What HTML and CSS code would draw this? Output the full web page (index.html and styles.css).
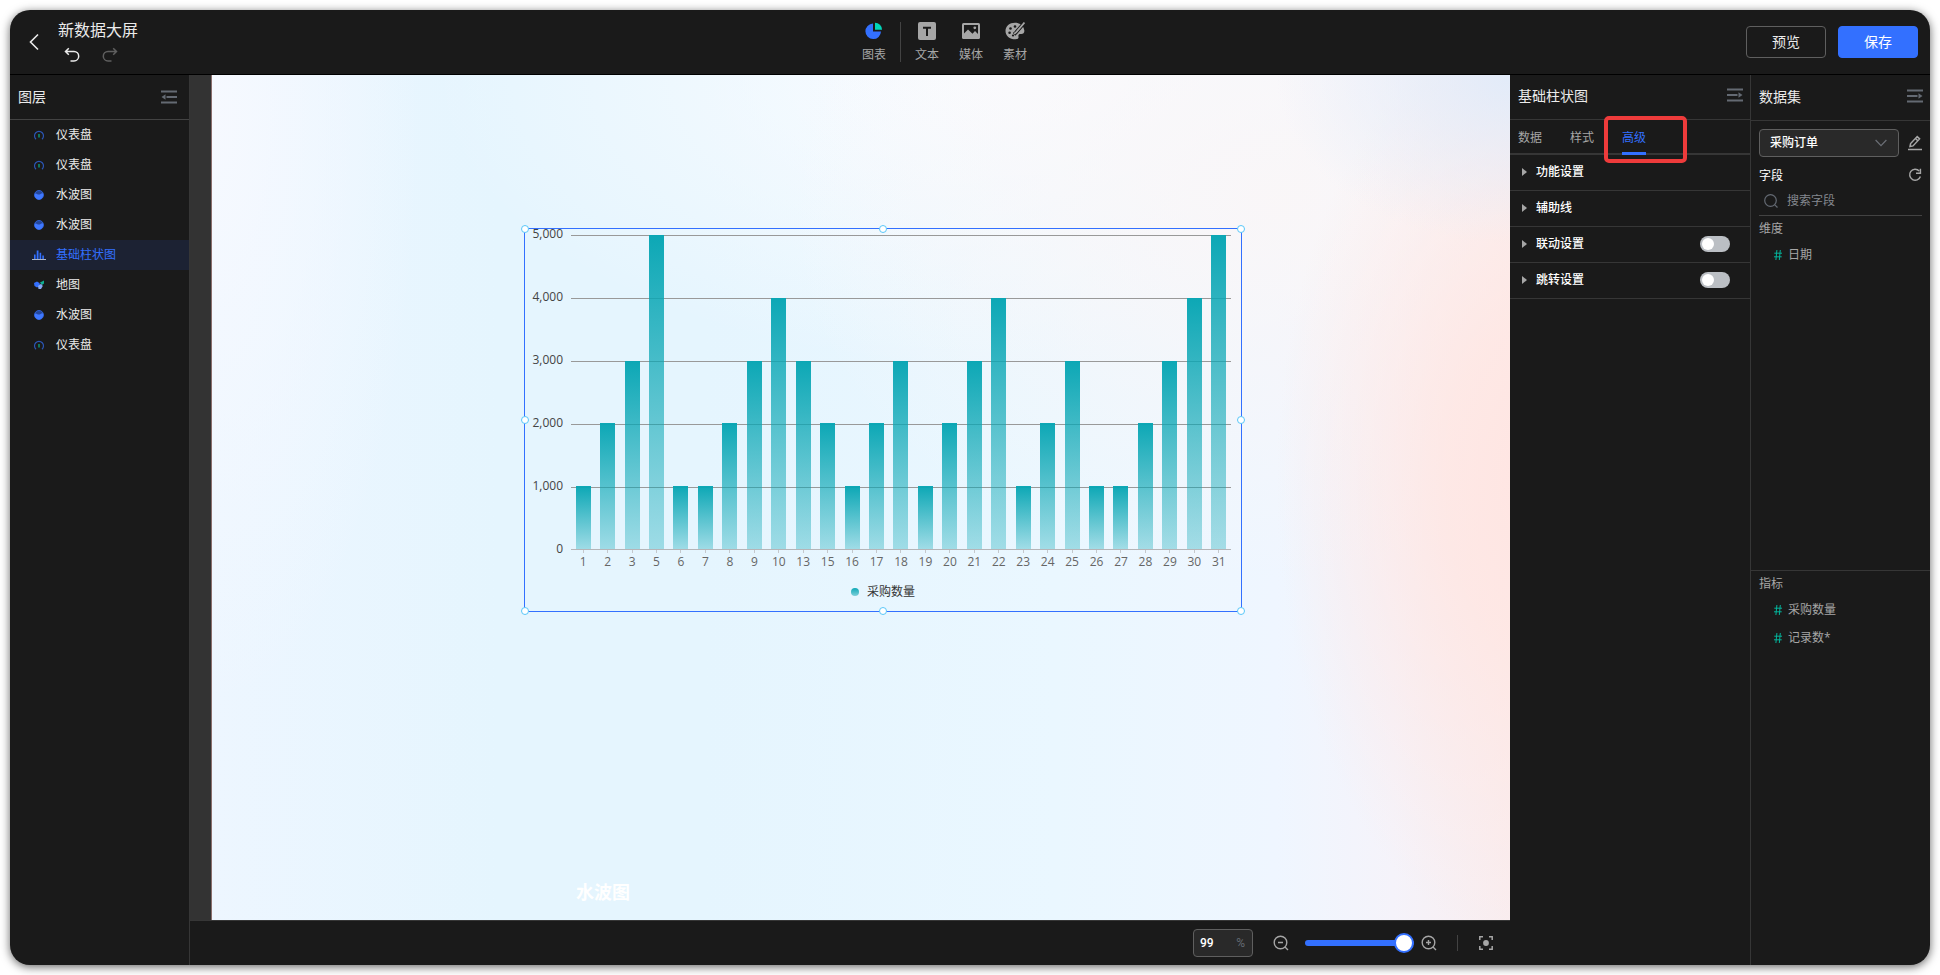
FILE: index.html
```html
<!DOCTYPE html>
<html lang="zh-CN">
<head>
<meta charset="utf-8">
<title>新数据大屏</title>
<link rel="stylesheet" href="styles.css">
</head>
<body>
<svg class="sprite" aria-hidden="true">
  <defs>
    <symbol id="i-gauge" viewBox="0 0 12 12">
      <path d="M3 10.200A4.500 4.500 0 1 1 9 10.200" fill="none" stroke="#2b55b5" stroke-width="1.200"/>
      <path d="M5.200 5h1.600v3.400H5.200z" fill="#0d8c70"/>
    </symbol>
    <symbol id="i-water" viewBox="0 0 12 12">
      <circle cx="6" cy="6" r="4.500" fill="#24479c" stroke="#2f5fd0" stroke-width="1"/>
      <path d="M2 4.600c1.400-.6 2.400 1.200 3.800 1 1.600-.2 2.400-1.800 4-1.400A4.300 4.300 0 1 1 2 4.600z" fill="#3f78ff"/>
    </symbol>
    <symbol id="i-bars" viewBox="0 0 14 12">
      <path d="M2 5.500h1.600V10H2zM4.700 1.500h1.800V10H4.700zM7.600 3.800h1.600V10H7.600zM10.300 6.500h1.600V10h-1.600z" fill="#3370ff"/>
      <path d="M0 10.500h14" stroke="#aab4c8" stroke-width="1"/>
    </symbol>
    <symbol id="i-map" viewBox="0 0 12 12">
      <path d="M1 4l3-1.500 2.500 1.500L7 7 4 8.500 1.500 7z" fill="#3370ff"/>
      <path d="M7 3.500l4-2v3L9 6z" fill="#0fae92"/>
      <path d="M5 7l3-2.200L9.800 7 8 10H5.500z" fill="#86a9f5"/>
    </symbol>
    <symbol id="i-unfold" viewBox="0 0 16 14">
      <path d="M0 1.500h16M0 7h10.500M0 12.500h16" stroke="#646a73" stroke-width="2"/>
      <path d="M11.500 4.300L15.500 7l-4 2.700z" fill="#646a73"/>
    </symbol>
    <symbol id="i-fold" viewBox="0 0 16 14">
      <path d="M0 1.500h16M5.500 7H16M0 12.500h16" stroke="#646a73" stroke-width="2"/>
      <path d="M4.500 4.300L.5 7l4 2.700z" fill="#646a73"/>
    </symbol>
    <symbol id="i-caret" viewBox="0 0 5 8"><path d="M0 0l5 4-5 4z" fill="#a6a6a6"/></symbol>
  </defs>
</svg>

<div class="app">
  <header class="topbar">
    <div class="topbar-left">
      <button class="icon-btn back" aria-label="返回">
        <svg width="12" height="18" viewBox="0 0 12 18"><path d="M10 1.500L2.500 9l7.500 7.500" fill="none" stroke="#ebebeb" stroke-width="1.600"/></svg>
      </button>
      <div class="title-block">
        <h1>新数据大屏</h1>
        <div class="history">
          <button class="icon-btn" aria-label="撤销">
            <svg width="16" height="16" viewBox="0 0 16 16"><path d="M4.800 1.200L1.500 4.500l3.300 3.300M1.800 4.500H10a4.700 4.700 0 0 1 0 9.400H6.500" fill="none" stroke="#ebebeb" stroke-width="1.500"/></svg>
          </button>
          <button class="icon-btn" aria-label="重做" disabled>
            <svg width="16" height="16" viewBox="0 0 16 16"><path d="M11.200 1.200l3.300 3.300-3.300 3.300M14.200 4.500H6a4.700 4.700 0 0 0 0 9.400h3.500" fill="none" stroke="#5f5f5f" stroke-width="1.500"/></svg>
          </button>
        </div>
      </div>
    </div>

    <nav class="tools" aria-label="组件">
      <button class="tool">
        <svg width="18" height="18" viewBox="0 0 18 18"><path d="M8 1.500v8h8A7.800 7.800 0 1 1 8 1.500z" fill="#3370ff"/><path d="M10 .8a7 7 0 0 1 7 7h-7z" fill="#00d6b9"/></svg>
        <span>图表</span>
      </button>
      <span class="tool-sep"></span>
      <button class="tool">
        <svg width="18" height="18" viewBox="0 0 18 18"><rect x="0" y="0" width="18" height="18" rx="2" fill="#a6a6a6"/><path d="M5 5.800h8M9 5v9" stroke="#1a1a1a" stroke-width="2"/></svg>
        <span>文本</span>
      </button>
      <button class="tool">
        <svg width="18" height="18" viewBox="0 0 18 18"><rect x="0" y="1" width="18" height="16" rx="1.500" fill="#a6a6a6"/><path d="M2 3h14v9l-3-3-2.500 2.800L6 7.500l-4 4z" fill="#1a1a1a"/><circle cx="12.800" cy="5.800" r="1.400" fill="#a6a6a6"/></svg>
        <span>媒体</span>
      </button>
      <button class="tool">
        <svg width="20" height="18" viewBox="0 0 20 18">
          <path d="M10 .8c4 0 8.500 2.400 9.300 7.500.4 2.600-1.200 4-3.300 3.800-2-.2-3 .8-2.500 2.600.4 1.700-.8 2.600-3 2.600C4.500 17.300.5 13.800.5 9S4.500.8 10 .8z" fill="#a6a6a6"/>
          <g fill="#1a1a1a"><circle cx="10" cy="4.500" r="1.300"/><circle cx="5.500" cy="6.500" r="1.300"/><circle cx="4.600" cy="10.800" r="1.300"/><circle cx="8" cy="13.500" r="1.100"/></g>
          <path d="M19.500.5L11 10.500l-2 1.800" stroke="#1a1a1a" stroke-width="3.600" fill="none"/>
          <path d="M19.500.5L11.500 9.800l-2.300 2.100" stroke="#a6a6a6" stroke-width="1.700" fill="none"/>
        </svg>
        <span>素材</span>
      </button>
    </nav>

    <div class="actions">
      <button class="btn">预览</button>
      <button class="btn btn-primary">保存</button>
    </div>
  </header>

  <div class="body">
    <aside class="layers">
      <div class="layers-head">
        <h2>图层</h2>
        <button class="icon-btn" aria-label="收起图层"><svg width="16" height="14"><use href="#i-fold"/></svg></button>
      </div>
      <ul class="layer-list">
        <li><svg width="14" height="12"><use href="#i-gauge"/></svg><span>仪表盘</span></li>
        <li><svg width="14" height="12"><use href="#i-gauge"/></svg><span>仪表盘</span></li>
        <li><svg width="14" height="12"><use href="#i-water"/></svg><span>水波图</span></li>
        <li><svg width="14" height="12"><use href="#i-water"/></svg><span>水波图</span></li>
        <li class="active"><svg width="14" height="12"><use href="#i-bars"/></svg><span>基础柱状图</span></li>
        <li><svg width="14" height="12"><use href="#i-map"/></svg><span>地图</span></li>
        <li><svg width="14" height="12"><use href="#i-water"/></svg><span>水波图</span></li>
        <li><svg width="14" height="12"><use href="#i-gauge"/></svg><span>仪表盘</span></li>
      </ul>
    </aside>

    <main class="stage">
      <div class="stage-view">
        <div class="canvas">
          <section class="widget" aria-label="基础柱状图">
            <div class="chart">
              <div class="y-axis">
                <span>5,000</span><span>4,000</span><span>3,000</span><span>2,000</span><span>1,000</span><span>0</span>
              </div>
              <div class="plot">
                <div class="bars">
                  <i style="height:20%"></i><i style="height:40%"></i><i style="height:60%"></i><i style="height:100%"></i><i style="height:20%"></i><i style="height:20%"></i><i style="height:40%"></i><i style="height:60%"></i><i style="height:80%"></i><i style="height:60%"></i><i style="height:40%"></i><i style="height:20%"></i><i style="height:40%"></i><i style="height:60%"></i><i style="height:20%"></i><i style="height:40%"></i><i style="height:60%"></i><i style="height:80%"></i><i style="height:20%"></i><i style="height:40%"></i><i style="height:60%"></i><i style="height:20%"></i><i style="height:20%"></i><i style="height:40%"></i><i style="height:60%"></i><i style="height:80%"></i><i style="height:100%"></i>
                </div>
                <div class="x-axis">
                  <span>1</span><span>2</span><span>3</span><span>5</span><span>6</span><span>7</span><span>8</span><span>9</span><span>10</span><span>13</span><span>15</span><span>16</span><span>17</span><span>18</span><span>19</span><span>20</span><span>21</span><span>22</span><span>23</span><span>24</span><span>25</span><span>26</span><span>27</span><span>28</span><span>29</span><span>30</span><span>31</span>
                </div>
              </div>
            </div>
            <div class="legend"><i></i><span>采购数量</span></div>
            <b class="handle nw"></b><b class="handle n"></b><b class="handle ne"></b><b class="handle w"></b><b class="handle e"></b><b class="handle sw"></b><b class="handle s"></b><b class="handle se"></b>
          </section>
          <div class="water-title">水波图</div>
        </div>
      </div>
      <footer class="zoombar">
        <label class="zoom-input"><input type="text" value="99" aria-label="缩放比例"><span>%</span></label>
        <button class="icon-btn zoom-out" aria-label="缩小">
          <svg width="16" height="16" viewBox="0 0 16 16"><g fill="none" stroke="#a6a6a6" stroke-width="1.400"><circle cx="7.500" cy="7.500" r="6.300"/><path d="M12 12l3 3M5 7.500h5"/></g></svg>
        </button>
        <input class="zoom-range" type="range" min="10" max="99" value="99" aria-label="缩放">
        <button class="icon-btn zoom-in" aria-label="放大">
          <svg width="16" height="16" viewBox="0 0 16 16"><g fill="none" stroke="#a6a6a6" stroke-width="1.400"><circle cx="7.500" cy="7.500" r="6.300"/><path d="M12 12l3 3M5 7.500h5M7.500 5v5"/></g></svg>
        </button>
        <span class="zoom-sep"></span>
        <button class="icon-btn" aria-label="适应画布">
          <svg width="14" height="14" viewBox="0 0 14 14"><path d="M.8 4V.8H4M10 .8h3.200V4M13.200 10v3.200H10M4 13.200H.8V10" fill="none" stroke="#a6a6a6" stroke-width="1.500"/><circle cx="7" cy="7" r="2.900" fill="#a6a6a6"/></svg>
        </button>
      </footer>
    </main>

    <aside class="props">
      <div class="panel-head">
        <h2>基础柱状图</h2>
        <button class="icon-btn" aria-label="收起属性"><svg width="16" height="14"><use href="#i-unfold"/></svg></button>
      </div>
      <div class="tabs" role="tablist">
        <button role="tab">数据</button>
        <button role="tab">样式</button>
        <button role="tab" class="on" aria-selected="true">高级</button>
        <span class="mark"></span>
      </div>
      <div class="row"><button class="fold"><svg width="5" height="8"><use href="#i-caret"/></svg>功能设置</button></div>
      <div class="row"><button class="fold"><svg width="5" height="8"><use href="#i-caret"/></svg>辅助线</button></div>
      <div class="row"><button class="fold"><svg width="5" height="8"><use href="#i-caret"/></svg>联动设置</button><input class="switch" type="checkbox" aria-label="联动设置"></div>
      <div class="row"><button class="fold"><svg width="5" height="8"><use href="#i-caret"/></svg>跳转设置</button><input class="switch" type="checkbox" aria-label="跳转设置"></div>
    </aside>

    <aside class="dataset">
      <div class="panel-head">
        <h2>数据集</h2>
        <button class="icon-btn" aria-label="收起数据集"><svg width="16" height="14"><use href="#i-unfold"/></svg></button>
      </div>
      <div class="source">
        <div class="select">
          <select aria-label="数据集"><option>采购订单</option></select>
          <svg width="12" height="8" viewBox="0 0 12 8"><path d="M.6 1L6 6.600 11.400 1" fill="none" stroke="#6b6f76" stroke-width="1.200"/></svg>
        </div>
        <button class="icon-btn" aria-label="编辑">
          <svg width="14" height="16" viewBox="0 0 14 16"><path d="M2 11.500l.6-3L9.200 1.600l2.400 2.300L5 10.900zM7.500 3.500l2.300 2.300" fill="none" stroke="#a6a6a6" stroke-width="1.500"/><path d="M0 14.500h14" stroke="#a6a6a6" stroke-width="1.500"/></svg>
        </button>
      </div>
      <div class="fields-head">
        <span>字段</span>
        <button class="icon-btn" aria-label="刷新">
          <svg width="14" height="14" viewBox="0 0 14 14"><path d="M11.200 3A5.500 5.500 0 1 0 12.400 8.500" fill="none" stroke="#a6a6a6" stroke-width="1.500"/><path d="M12.400.8v4.400H8" fill="none" stroke="#a6a6a6" stroke-width="1.500"/></svg>
        </button>
      </div>
      <label class="search">
        <svg width="14" height="14" viewBox="0 0 14 14"><g fill="none" stroke="#646a73" stroke-width="1.200"><circle cx="6.500" cy="6.500" r="5.800"/><path d="M10.800 10.800l2.700 2.700"/></g></svg>
        <input type="text" placeholder="搜索字段" aria-label="搜索字段">
      </label>
      <section class="group dims">
        <h3>维度</h3>
        <ul><li><svg width="8" height="10" viewBox="0 0 8 10"><path d="M2.900 0L1.900 10M6.300 0l-1 10M.3 3.200H8M0 6.800h7.700" fill="none" stroke="#04b49c" stroke-width="1"/></svg><span>日期</span></li></ul>
      </section>
      <section class="group metrics">
        <h3>指标</h3>
        <ul>
          <li><svg width="8" height="10" viewBox="0 0 8 10"><path d="M2.900 0L1.900 10M6.300 0l-1 10M.3 3.200H8M0 6.800h7.700" fill="none" stroke="#04b49c" stroke-width="1"/></svg><span>采购数量</span></li>
          <li><svg width="8" height="10" viewBox="0 0 8 10"><path d="M2.900 0L1.900 10M6.300 0l-1 10M.3 3.200H8M0 6.800h7.700" fill="none" stroke="#04b49c" stroke-width="1"/></svg><span>记录数*</span></li>
        </ul>
      </section>
    </aside>
  </div>
</div>
</body>
</html>
```
FILE: styles.css
```css
* { box-sizing: border-box; }

body {
  margin: 0;
  height: 100vh;
  padding: 10px;
  background: #fff;
  color: #ebebeb;
  font: 12px/20px "Open Sans", "Noto Sans CJK SC", sans-serif;
}

h1, h2, h3, ul { margin: 0; padding: 0; font-weight: 400; list-style: none; }
button, input, select { font: inherit; color: inherit; }
button { padding: 0; border: 0; background: none; }
svg { display: block; flex: none; }
.sprite { position: absolute; width: 0; height: 0; }
.icon-btn { display: flex; align-items: center; justify-content: center; }

.app {
  display: flex;
  flex-direction: column;
  height: 100%;
  overflow: hidden;
  border-radius: 20px;
  background: #1a1a1a;
  box-shadow: 0 2px 10px rgba(0, 0, 0, .6);
}

/* top bar */
.topbar {
  display: flex;
  align-items: center;
  justify-content: space-between;
  height: 65px;
  flex: none;
  padding: 0 12px 0 18px;
  border-bottom: 1px solid #000;
}
.topbar-left { display: flex; align-items: center; gap: 18px; padding-right: 5px; }
.title-block h1 { font-size: 16px; line-height: 24px; }
.history { display: flex; gap: 22px; padding: 5px 0 4px 6px; }
.tools { display: flex; align-items: center; padding-top: 3px; }
.tool { display: flex; flex-direction: column; align-items: center; gap: 5px; width: 44px; color: #a6a6a6; }
.tool-sep { width: 1px; height: 40px; margin: 0 4px 3px; background: #434343; }
.actions { display: flex; gap: 12px; }
.btn { width: 80px; height: 32px; border: 1px solid #5f5f5f; border-radius: 4px; font-size: 14px; }
.btn-primary { border-color: #3370ff; background: #3370ff; color: #fff; }

.body { display: flex; flex: 1; min-height: 0; }
h2 { font-size: 14px; line-height: 22px; }

/* layers */
.layers { width: 180px; flex: none; border-right: 1px solid #363636; }
.layers-head {
  display: flex;
  align-items: center;
  justify-content: space-between;
  height: 45px;
  padding: 0 12px 0 8px;
  border-bottom: 1px solid #434343;
}
.layer-list li { display: flex; align-items: center; gap: 10px; height: 30px; padding-left: 22px; }
.layer-list .active { background: #1c2233; color: #3370ff; }

/* stage */
.stage { display: flex; flex-direction: column; flex: 1; min-width: 0; }
.stage-view { display: flex; flex: 1; min-height: 0; padding-left: 21px; background: #333; }
.canvas {
  position: relative;
  flex: 1;
  overflow: hidden;
  border-left: 1px solid #8a6e6c;
  background:
    radial-gradient(ellipse 18% 20% at 100% 0%, #e2ebf9 0%, rgba(226, 235, 249, 0) 100%),
    radial-gradient(ellipse 20% 55% at 102% 48%, #ffe5e2 0%, rgba(255, 230, 226, .8) 35%, rgba(255, 236, 232, 0) 100%),
    radial-gradient(ellipse 38% 45% at 82% 15%, rgba(250, 246, 247, .9) 0%, rgba(250, 248, 250, 0) 100%),
    radial-gradient(ellipse 45% 35% at 62% 0%, #fbfcff 0%, rgba(250, 251, 255, 0) 100%),
    radial-gradient(ellipse 16% 70% at 0% 5%, #f6f9ff 0%, rgba(246, 249, 255, 0) 100%),
    linear-gradient(90deg, #edf6ff 0%, #e5f5fe 22%, #e5f5fe 38%, #eaf7ff 65%, #eff6ff 82%, #f5f3fa 91%, #f9edef 100%);
}

.widget {
  position: absolute;
  left: 312px;
  top: 153px;
  width: 718px;
  height: 384px;
  border: 1px solid #3370ff;
}
.chart { display: flex; gap: 8px; padding: 6px 10px 0 9px; }
.y-axis {
  display: flex;
  flex-direction: column;
  justify-content: space-between;
  width: 29px;
  height: 335px;
  margin-top: -11px;
  text-align: right;
  color: #444;
}
.y-axis span { display: flex; justify-content: flex-end; }
.plot { flex: 1; }
.bars {
  display: grid;
  grid-template-columns: repeat(27, 1fr);
  align-items: end;
  justify-items: center;
  height: 315px;
  border-bottom: 1px solid #b5b5b8;
  background: repeating-linear-gradient(to bottom, #999 0 1px, transparent 1px 63px);
}
.bars i { width: 15px; background: linear-gradient(rgba(8, 166, 180, .98), rgba(8, 166, 180, .32)); }
.x-axis { display: grid; grid-template-columns: repeat(27, 1fr); color: #666; text-align: center; }
.x-axis span { line-height: 18px; }
.x-axis span::before { content: ""; display: block; width: 1px; height: 3px; margin: 0 auto; background: #c4c8cc; }
.legend { display: flex; align-items: center; justify-content: center; gap: 8px; margin-top: 11px; color: #333; }
.legend i { width: 8px; height: 8px; border-radius: 50%; background: linear-gradient(#0fa8b6, #7fd0da); }

.handle {
  position: absolute;
  width: 8px;
  height: 8px;
  margin: -4px;
  border: 1px solid #59c7f9;
  border-radius: 50%;
  background: #fff;
}
.nw, .n, .ne { top: 0; }
.w, .e { top: 50%; }
.sw, .s, .se { top: 100%; }
.nw, .w, .sw { left: 0; }
.n, .s { left: 50%; }
.ne, .e, .se { left: 100%; }

.water-title { position: absolute; left: 364px; bottom: 15px; color: #fff; font-size: 18px; line-height: 26px; font-weight: 700; }

/* zoom bar */
.zoombar {
  display: flex;
  align-items: center;
  justify-content: flex-end;
  flex: none;
  height: 45px;
  padding-right: 17px;
  border-top: 1px solid #363636;
}
.zoom-input {
  display: flex;
  align-items: center;
  width: 60px;
  height: 28px;
  padding: 0 7px 0 6px;
  border: 1px solid #5f5f5f;
  border-radius: 4px;
  background: #292929;
  color: #646a73;
  font-family: Roboto, sans-serif;
}
.zoom-input input { width: 100%; min-width: 0; padding: 0; border: 0; outline: 0; background: none; color: #fff; font-weight: 500; }
.zoom-out { margin: 0 16px 0 20px; }
.zoom-range { width: 109px; height: 20px; margin: 0; appearance: none; background: none; }
.zoom-range::-webkit-slider-runnable-track { height: 6px; border-radius: 3px; background: #3370ff; }
.zoom-range::-webkit-slider-thumb {
  appearance: none;
  width: 20px;
  height: 20px;
  margin-top: -7px;
  border: 2px solid #3370ff;
  border-radius: 50%;
  background: #fff;
}
.zoom-in { margin-left: 7px; }
.zoom-sep { width: 1px; height: 16px; margin: 0 21px 0 20px; background: #434343; }

/* property panel */
.props { width: 241px; flex: none; border-right: 1px solid #363636; }
.panel-head {
  display: flex;
  align-items: center;
  justify-content: space-between;
  height: 45px;
  flex: none;
  padding: 0 7px 2px 8px;
  border-bottom: 1px solid #363636;
}
.panel-head .icon-btn { margin-bottom: 2px; }
.tabs { position: relative; display: flex; gap: 28px; height: 35px; padding-left: 8px; border-bottom: 2px solid #363636; }
.tabs button { height: 35px; padding-top: 3px; border-bottom: 3px solid transparent; color: #a6a6a6; }
.tabs .on { border-color: #3370ff; color: #3370ff; }
.mark { position: absolute; left: 94px; top: -4px; width: 83px; height: 47px; border: 4px solid #ee3b3b; border-radius: 5px; }
.row {
  display: flex;
  align-items: center;
  justify-content: space-between;
  height: 36px;
  padding: 0 20px 1px 12px;
  border-bottom: 1px solid #363636;
}
.fold { display: flex; align-items: center; gap: 9px; font-weight: 500; color: #fff; }
.switch { appearance: none; width: 30px; height: 16px; margin: 0; padding: 2px; border-radius: 8px; background: #bbbfc4; }
.switch::before { content: ""; display: block; width: 12px; height: 12px; border-radius: 50%; background: #fff; }

/* dataset panel */
.dataset { display: flex; flex-direction: column; width: 179px; flex: none; }
.dataset .panel-head { height: 46px; }
.source { display: flex; align-items: center; justify-content: space-between; padding: 8px 8px 0; }
.select { position: relative; width: 140px; }
.select select {
  display: block;
  width: 100%;
  height: 28px;
  padding: 0 10px;
  appearance: none;
  border: 1px solid #5f5f5f;
  border-radius: 4px;
  background: #292929;
  color: #fff;
  font-weight: 500;
}
.select svg { position: absolute; right: 12px; top: 10px; }
.fields-head { display: flex; align-items: center; justify-content: space-between; margin: 9px 8px 0; color: #fff; }
.fields-head .icon-btn { margin-bottom: 2px; }
.search { display: flex; align-items: center; gap: 9px; height: 30px; margin: 0 8px; padding-left: 5px; border-bottom: 1px solid #434343; }
.search input { width: 100%; min-width: 0; padding: 0; border: 0; outline: 0; background: none; }
.search input::placeholder { color: #84888f; }
.group { padding: 3px 8px 0; color: #a6a6a6; }
.dims { flex: 9; }
.metrics { flex: 10; border-top: 1px solid #363636; }
.group h3 { font-size: 12px; line-height: 20px; }
.group ul { padding: 2px 0 0 15px; }
.group li { display: flex; align-items: center; gap: 6px; height: 28px; }
```
